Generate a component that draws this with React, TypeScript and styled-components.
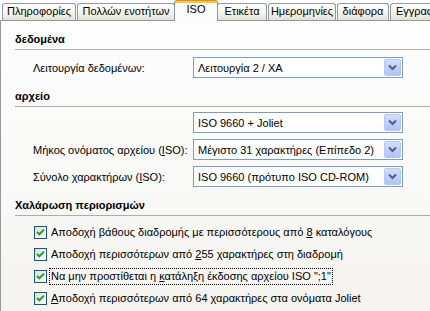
import React from "react";
import styled, { createGlobalStyle } from "styled-components";

const Global = createGlobalStyle`
  html, body { margin: 0; padding: 0; background: #fff; }
  body {
    font-family: "Liberation Sans", "DejaVu Sans", sans-serif;
    font-size: 11px;
    color: #000;
  }
`;

const Frame = styled.div`
  width: 430px;
  height: 311px;
  overflow: hidden;
  display: flex;
  flex-direction: column;
  background: #fff;
`;

const TabStrip = styled.div`
  flex: none;
  display: flex;
  align-items: flex-end;
  height: 20px;
  padding-left: 2px;
  white-space: nowrap;
  position: relative;
  z-index: 1;
`;

const Tab = styled.div<{ $active?: boolean; $w: number }>`
  flex: none;
  box-sizing: border-box;
  width: ${(p) => p.$w}px;
  height: ${(p) => (p.$active ? 21 : 17)}px;
  margin: ${(p) => (p.$active ? "0 -1px -1px -2px" : "0 1px 0 0")};
  border: 1px solid #919b9c;
  border-bottom: none;
  border-radius: 3px 3px 0 0;
  line-height: ${(p) => (p.$active ? 16 : 15)}px;
  text-align: center;
  overflow: hidden;
  position: relative;
  z-index: ${(p) => (p.$active ? 2 : 1)};
  background: ${(p) =>
    p.$active
      ? "#fcfcfe"
      : "linear-gradient(to bottom, #ffffff 0%, #f3f2ec 60%, #e2e0d6 100%)"};
  ${(p) =>
    p.$active
      ? `border-top: 1px solid #e68b2c; box-shadow: inset 0 2px 0 #ffc73c;`
      : ""}
`;

const Panel = styled.div`
  flex: none;
  width: 460px;
  height: 320px;
  box-sizing: border-box;
  border: 1px solid #919b9c;
  background: linear-gradient(to bottom, #fdfdfe 0%, #f9f9f7 50%, #f3f2ee 100%);
  padding-left: 14px;
  display: flex;
  flex-direction: column;
`;

const Heading = styled.div<{ $top: number }>`
  margin-top: ${(p) => p.$top}px;
  height: 14px;
  line-height: 14px;
  font-weight: bold;
`;

const Separator = styled.div`
  margin-top: 3px;
  height: 1px;
  background: #aeada8;
`;

const FieldRow = styled.div<{ $top: number }>`
  margin-top: ${(p) => p.$top}px;
  display: flex;
  align-items: center;
  height: 21px;
  padding-left: 18px;
`;

const Label = styled.div`
  width: 160px;
  flex: none;
`;

const Spacer = styled.div`
  width: 160px;
  flex: none;
`;

const Combo = styled.div`
  width: 210px;
  height: 21px;
  box-sizing: border-box;
  border: 1px solid #7f9db9;
  background: #fff;
  display: flex;
  align-items: center;
  padding: 1px;
`;

const ComboText = styled.div`
  flex: 1;
  padding-left: 3px;
  white-space: nowrap;
  overflow: hidden;
`;

const ComboButton = styled.div`
  flex: none;
  width: 17px;
  height: 17px;
  box-sizing: border-box;
  border: 1px solid #b7c8f2;
  border-radius: 2px;
  background: linear-gradient(to bottom, #d2ddfb 0%, #bccdf8 60%, #b0c4f5 100%);
  display: flex;
  align-items: center;
  justify-content: center;
`;

const CheckList = styled.div`
  margin-top: 5px;
  display: flex;
  flex-direction: column;
`;

const CheckRow = styled.div`
  display: flex;
  align-items: center;
  height: 22px;
  padding-left: 19px;
  gap: 2px;
  white-space: nowrap;
`;

const CheckLabel = styled.span<{ $focused?: boolean }>`
  padding: 1px 1px;
  border: 1px ${(p) => (p.$focused ? "dotted #000" : "solid transparent")};
  line-height: 13px;
`;

const Chevron = () => (
  <svg width="9" height="7" viewBox="0 0 9 7">
    <polyline points="1,1.5 4.5,5 8,1.5" fill="none" stroke="#4d6185" strokeWidth="2" />
  </svg>
);

const CheckBox = () => (
  <svg width="13" height="13" viewBox="0 0 13 13">
    <defs>
      <linearGradient id="cbg" x1="0" y1="0" x2="1" y2="1">
        <stop offset="0" stopColor="#dcdcd7" />
        <stop offset="1" stopColor="#ffffff" />
      </linearGradient>
    </defs>
    <rect x="0.5" y="0.5" width="12" height="12" fill="url(#cbg)" stroke="#1c5180" />
    <polyline points="3,6 5.3,8.3 10,3.6" fill="none" stroke="#21a121" strokeWidth="2" />
  </svg>
);

const Select: React.FC<{ value: string }> = ({ value }) => (
  <Combo>
    <ComboText>{value}</ComboText>
    <ComboButton>
      <Chevron />
    </ComboButton>
  </Combo>
);

const tabs: { label: string; w: number }[] = [
  { label: "Πληροφορίες", w: 74 },
  { label: "Πολλών ενοτήτων", w: 98 },
  { label: "ISO", w: 44 },
  { label: "Ετικέτα", w: 50 },
  { label: "Ημερομηνίες", w: 68 },
  { label: "διάφορα", w: 52 },
  { label: "Εγγραφή", w: 56 },
];

export default function App() {
  return (
    <Frame>
      <Global />
      <TabStrip>
        {tabs.map((t) => (
          <Tab key={t.label} $w={t.w} $active={t.label === "ISO"}>
            {t.label}
          </Tab>
        ))}
      </TabStrip>
      <Panel>
        <Heading $top={11}>δεδομένα</Heading>
        <Separator />
        <FieldRow $top={7}>
          <Label>Λειτουργία δεδομένων:</Label>
          <Select value="Λειτουργία 2 / XA" />
        </FieldRow>

        <Heading $top={11}>αρχείο</Heading>
        <Separator />
        <FieldRow $top={5}>
          <Spacer />
          <Select value="ISO 9660 + Joliet" />
        </FieldRow>
        <FieldRow $top={6}>
          <Label>
            Μήκος ονόματος αρχείου (<u>I</u>SO):
          </Label>
          <Select value="Μέγιστο 31 χαρακτήρες (Επίπεδο 2)" />
        </FieldRow>
        <FieldRow $top={6}>
          <Label>
            Σύνολο χαρακτήρων (<u>I</u>SO):
          </Label>
          <Select value="ISO 9660 (πρότυπο ISO CD-ROM)" />
        </FieldRow>

        <Heading $top={11}>Χαλάρωση περιορισμών</Heading>
        <Separator />
        <CheckList>
          <CheckRow>
            <CheckBox />
            <CheckLabel>
              Αποδοχή βάθους διαδρομής με περισσότερους από <u>8</u> καταλόγους
            </CheckLabel>
          </CheckRow>
          <CheckRow>
            <CheckBox />
            <CheckLabel>
              Αποδοχή περισσότερων από <u>2</u>55 χαρακτήρες στη διαδρομή
            </CheckLabel>
          </CheckRow>
          <CheckRow>
            <CheckBox />
            <CheckLabel $focused>
              Να μην προστίθεται η <u>κ</u>ατάληξη έκδοσης αρχείου ISO ";1"
            </CheckLabel>
          </CheckRow>
          <CheckRow>
            <CheckBox />
            <CheckLabel>
              <u>Α</u>ποδοχή περισσότερων από 64 χαρακτήρες στα ονόματα Joliet
            </CheckLabel>
          </CheckRow>
        </CheckList>
      </Panel>
    </Frame>
  );
}
